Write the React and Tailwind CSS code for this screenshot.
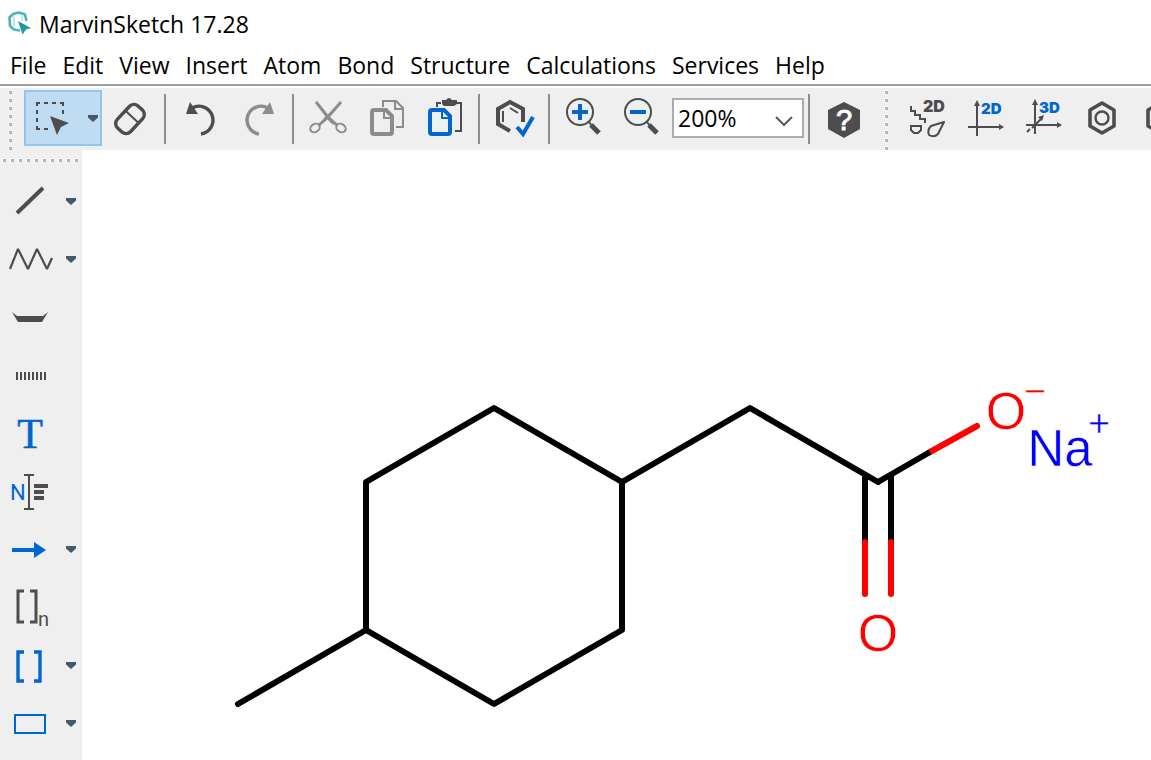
import React, { useState } from 'react'

const DARK = '#4d4d4d'
const GRAY = '#8c8c8c'
const BLUE = '#0066d0'

const menuItems = ['File', 'Edit', 'View', 'Insert', 'Atom', 'Bond', 'Structure', 'Calculations', 'Services', 'Help']

const Logo = () => (
    <svg width="24" height="26" viewBox="0 0 24 26" fill="none" aria-hidden="true">
        <path d="M5 3 L11 1.5 L17 3.5 L18.5 10 M5 3 L1.5 6.5 L2 15 L6 18.5 L12 19.5" stroke="#4db3b3" strokeWidth="2.6" strokeLinejoin="round" />
        <path d="M6 5 V15 M14 5 V10" stroke="#b5dfdf" strokeWidth="1.5" />
        <path d="M10 10 L23 17 L18 18.5 L14.5 23.5 Z" fill="#1f9a9a" />
    </svg>
)

const ToolIcon = ({ children, stroke = DARK, width = 2 }) => (
    <svg
        width="58"
        height="56"
        viewBox="0 0 58 56"
        fill="none"
        stroke={stroke}
        strokeWidth={width}
        className="block"
        aria-hidden="true"
    >
        {children}
    </svg>
)

const ToolButton = ({ label, children, disabled }) => (
    <button type="button" aria-label={label} disabled={disabled} className="h-14 w-[58px] shrink-0">
        {children}
    </button>
)

const DownArrow = () => (
    <svg width="10" height="8" viewBox="0 0 10 8" className="block" aria-hidden="true">
        <path d="M0 1 H10 V3.5 L5 8 L0 3.5 Z" fill="#46586a" />
    </svg>
)

const Separator = () => (
    <div className="flex w-3 shrink-0 pt-1 pl-1">
        <div className="h-[50px] w-[2px] bg-[#8c8c8c]" />
    </div>
)

const Dot = () => <span className="block size-1 shrink-0 border-t border-l border-white bg-[#b4b4b4]" />

const Grip = () => (
    <div className="flex w-6 shrink-0 flex-col gap-1 pl-2">
        {[...Array(8)].map((_, i) => <Dot key={i} />)}
    </div>
)

const TurnArrow = ({ color }) => (
    <>
        <path d="M20 18 A14 14 0 1 1 29 44" strokeWidth="3.4" />
        <path d="M14 24 L18 12 L26 24 Z" fill={color} stroke="none" />
    </>
)

const sheet = (
    <>
        <path d="M16 20 H28 L34 26 V42 Q34 44 32 44 H16 Q14 44 14 42 V22 Q14 20 16 20 Z" strokeWidth="4" />
        <path d="M26 20 V28 H34" strokeWidth="2" />
    </>
)

const hexRing = (
    <>
        <path d="M30 13 L42 20 V36 L30 43 L18 36 V20 Z" strokeWidth="3.6" strokeLinejoin="round" />
        <circle cx="30" cy="28" r="6.5" strokeWidth="2.4" />
    </>
)

const Toolbar = () => {
    const [zoom, setZoom] = useState('200%')

    return (
        <div className="flex h-[62px] overflow-hidden bg-[#efefef] pt-[2px]">
            <Grip />
            <div className="flex h-14 w-[78px] shrink-0 items-center border-2 border-[#8fc6f2] bg-[#c0dcf3]">
                <button type="button" aria-label="Rectangle selection" aria-pressed="true" className="w-[60px]">
                    <svg width="60" height="52" viewBox="0 0 60 52" fill="none" stroke={DARK} strokeWidth="2" className="block" aria-hidden="true">
                        <path d="M10 11 H38" strokeDasharray="4 4" />
                        <path d="M11 10 V38" strokeDasharray="4 4" />
                        <path d="M37 10 V23" strokeDasharray="4 4" />
                        <path d="M10 37 H24" strokeDasharray="4 4" />
                        <path d="M24 24 L43 31 L35 35 L31 43 Z" fill={DARK} stroke="none" />
                    </svg>
                </button>
                <button type="button" aria-label="Selection modes" className="flex w-[14px] justify-center">
                    <DownArrow />
                </button>
            </div>
            <ToolButton label="Erase">
                <ToolIcon width="3.4">
                    <g transform="rotate(-47 28 29)">
                        <rect x="13" y="20" width="30" height="18" rx="6" />
                        <path d="M31 20 V38" strokeWidth="2" />
                    </g>
                </ToolIcon>
            </ToolButton>
            <Separator />
            <ToolButton label="Undo">
                <ToolIcon><TurnArrow color={DARK} /></ToolIcon>
            </ToolButton>
            <ToolButton label="Redo" disabled>
                <ToolIcon stroke={GRAY}>
                    <g transform="matrix(-1 0 0 1 58 0)"><TurnArrow color={GRAY} /></g>
                </ToolIcon>
            </ToolButton>
            <Separator />
            <ToolButton label="Cut" disabled>
                <ToolIcon stroke={GRAY}>
                    <path d="M15 11 L31 30 L36 35 L32 34 L27 29 Z" fill={GRAY} stroke="none" />
                    <path d="M42 11 L25 31 L20 35 L24 28 Z" fill={GRAY} stroke="none" />
                    <path d="M16 12 L28 27 L37 35 M41 12 L28 27 L19 35" strokeWidth="3" />
                    <ellipse cx="15" cy="38" rx="5" ry="4" transform="rotate(-35 15 38)" />
                    <ellipse cx="41" cy="38" rx="5" ry="4" transform="rotate(35 41 38)" />
                </ToolIcon>
            </ToolButton>
            <ToolButton label="Copy" disabled>
                <ToolIcon stroke={GRAY}>
                    {sheet}
                    <path d="M25 17 V11 H38 L45 18 V37 H38 M37 11 V19 H45" />
                </ToolIcon>
            </ToolButton>
            <ToolButton label="Paste">
                <ToolIcon stroke={BLUE}>
                    {sheet}
                    <path d="M21 17 V13 H25 M40 13 H45 V41 H39" stroke={DARK} />
                    <path d="M26 10 H30 Q33 6 36 10 H41 V14 L38 16 H28 L26 14 Z" fill={DARK} stroke="none" />
                </ToolIcon>
            </ToolButton>
            <Separator />
            <ToolButton label="Check structure">
                <ToolIcon width="4">
                    <path d="M37 32 V19 L24 12 L12 19 V34 L24 41" />
                    <path d="M17 21 V32 M24 18 L32 23" strokeWidth="2" />
                    <path d="M31 37 L37 44 L47 27" stroke={BLUE} />
                </ToolIcon>
            </ToolButton>
            <Separator />
            <ToolButton label="Zoom in">
                <ToolIcon>
                    <circle cx="24" cy="22" r="13" />
                    <path d="M33 32 L36 36" />
                    <path d="M35 35 L43 43" strokeWidth="5" />
                    <path d="M16 22 H32 M24 14 V30" stroke={BLUE} strokeWidth="4" />
                </ToolIcon>
            </ToolButton>
            <ToolButton label="Zoom out">
                <ToolIcon>
                    <circle cx="24" cy="22" r="13" />
                    <path d="M33 32 L36 36" />
                    <path d="M35 35 L43 43" strokeWidth="5" />
                    <path d="M16 22 H32" stroke={BLUE} strokeWidth="4" />
                </ToolIcon>
            </ToolButton>
            <div className="relative mt-2 h-10 w-[132px] shrink-0">
                <select
                    aria-label="Zoom level"
                    value={zoom}
                    onChange={(e) => setZoom(e.target.value)}
                    className="h-full w-full appearance-none border-2 border-[#ababb3] bg-white pl-1 text-[23px] leading-6 text-black"
                >
                    <option>100%</option>
                    <option>200%</option>
                    <option>400%</option>
                </select>
                <svg width="18" height="12" viewBox="0 0 18 12" fill="none" className="pointer-events-none absolute top-[18px] right-[11px]" aria-hidden="true">
                    <path d="M1 1 L9 9 L17 1" stroke="#5a5a5a" strokeWidth="2" />
                </svg>
            </div>
            <Separator />
            <ToolButton label="Help">
                <ToolIcon>
                    <path d="M28 12 L44 20 V39 L28 48 L12 39 V20 Z" fill={DARK} stroke="none" />
                    <text x="28" y="40" textAnchor="middle" fontSize="29" fill="#fff" stroke="#fff" strokeWidth="1" className="font-['Liberation_Sans',sans-serif]">?</text>
                </ToolIcon>
            </ToolButton>
            <div className="-mr-[2px] flex pl-[2px]"><Grip /></div>
            <ToolButton label="Clean 2D">
                <ToolIcon>
                    <path d="M13 16 V21 H17 V25 H22 V29 H27 V33" />
                    <path d="M13 36 H23 V40 L20 43 H16 L13 40 Z" />
                    <path d="M46 32 L33 36 Q29 40 31 45 Q36 48 40 44 Z" strokeLinejoin="round" />
                    <text x="25" y="22" fontSize="16" fontWeight="900" fill={DARK} stroke="none" className="font-[Inter,sans-serif]">2D</text>
                </ToolIcon>
            </ToolButton>
            <ToolButton label="2D view">
                <ToolIcon>
                    <path d="M21 13 V46 M12 37 H45" />
                    <path d="M18 16 L21 10 L24 16 Z M43 34 L48 37 L43 40 Z" fill={DARK} stroke="none" />
                    <text x="25" y="24" fontSize="15" fontWeight="900" fill={BLUE} stroke="none" className="font-[Inter,sans-serif]">2D</text>
                </ToolIcon>
            </ToolButton>
            <ToolButton label="3D view">
                <ToolIcon>
                    <path d="M21 12 V44 M12 35 H45 M13 42 L16 39 M18 38 L28 28" />
                    <path d="M18 15 L21 9 L24 15 Z M43 32 L48 35 L43 38 Z M24 27 L30 25 L28 31 Z" fill={DARK} stroke="none" />
                    <text x="25" y="23" fontSize="15" fontWeight="900" fill={BLUE} stroke="none" className="font-[Inter,sans-serif]">3D</text>
                </ToolIcon>
            </ToolButton>
            <ToolButton label="Aromatize"><ToolIcon>{hexRing}</ToolIcon></ToolButton>
            <ToolButton label="Dearomatize"><ToolIcon>{hexRing}</ToolIcon></ToolButton>
        </div>
    )
}

const sideTools = [
    { label: 'Single bond', menu: true, icon: <path d="M17 41 L43 16" strokeWidth="4" /> },
    { label: 'Chain', menu: true, icon: <path d="M10 39 L18 19 L28 39 L37 19 L47 39 L52 28" strokeWidth="2.2" strokeLinejoin="bevel" /> },
    { label: 'Wedge', icon: <path d="M12 24 L18 34 H42 L48 24 L43 28 H17 Z" fill={DARK} stroke="none" /> },
    { label: 'Multiple bond', icon: <path d="M16 30 H46" strokeWidth="8" strokeDasharray="2 2" /> },
    {
        label: 'Text box',
        icon: <text x="30" y="44" textAnchor="middle" fontSize="42" fill={BLUE} stroke={BLUE} strokeWidth="0.5" className="font-['Liberation_Serif',serif]">T</text>,
    },
    {
        label: 'Name to structure',
        icon: (
            <>
                <text x="10" y="38" fontSize="22" fill={BLUE} stroke="none" className="font-[Roboto,sans-serif]">N</text>
                <path d="M29 13 V47 M24 13 H34 M24 47 H34" />
                <path d="M34 24 H48 M34 30 H44 M34 36 H44" strokeWidth="4" />
            </>
        ),
    },
    {
        label: 'Reaction arrow',
        menu: true,
        icon: (
            <>
                <path d="M12 30 H36" stroke={BLUE} strokeWidth="4" />
                <path d="M34 22 L46 30 L34 38 Z" fill={BLUE} stroke="none" />
            </>
        ),
    },
    {
        label: 'Repeating unit',
        icon: (
            <>
                <path d="M24 13 H18 V44 H24 M30 13 H36 V44 H30" strokeWidth="3" />
                <text x="38" y="48" fontSize="20" fill={DARK} stroke="none" className="font-[Roboto,sans-serif]">n</text>
            </>
        ),
    },
    { label: 'Brackets', menu: true, icon: <path d="M24 16 H18 V45 H24 M34 16 H40 V45 H34" stroke={BLUE} strokeWidth="3.4" /> },
    { label: 'Rectangle', menu: true, icon: <rect x="15" y="21" width="30" height="18" stroke={BLUE} /> },
]

const Sidebar = () => (
    <div className="w-[82px] shrink-0 bg-[#efefef]">
        <div className="flex h-[22px] gap-1 pt-2 pl-[2px]">
            {[...Array(10)].map((_, i) => <Dot key={i} />)}
        </div>
        {sideTools.map(({ label, menu, icon }) => (
            <div key={label} className="flex h-[58px]">
                <button type="button" aria-label={label} className="w-[60px]">
                    <svg width="60" height="58" viewBox="0 0 60 58" fill="none" stroke={DARK} strokeWidth="2" className="block" aria-hidden="true">
                        {icon}
                    </svg>
                </button>
                {menu && (
                    <button type="button" aria-label={`${label} options`} className="flex w-[22px] items-center justify-center">
                        <DownArrow />
                    </button>
                )}
            </div>
        ))}
    </div>
)

const Molecule = () => (
    <svg
        width="1069"
        height="610"
        viewBox="0 0 1069 610"
        fill="none"
        stroke="#000"
        strokeWidth="6"
        strokeLinejoin="round"
        strokeLinecap="round"
        className="block font-['Liberation_Sans',sans-serif]"
        role="img"
        aria-label="Sodium 2-(4-methylcyclohexyl)acetate"
    >
        {/* ring, methyl and side chain */}
        <path d="M284 332 L412 258 L540 332 V480 L412 554 L284 480 Z" />
        <path d="M156 554 L284 480 M540 332 L668 258 L796 332" />
        {/* C=O */}
        <path d="M783 326 V391 M809 326 V391" strokeLinecap="butt" />
        <path d="M783 392 V444 M809 392 V444" stroke="#f00" />
        <path d="M783 391 V400 M809 391 V400" stroke="#f00" strokeLinecap="butt" />
        {/* C-O */}
        <path d="M848 302 L895 276" stroke="#f00" />
        <path d="M796 332 L848 302" strokeLinecap="butt" />
        {/* the white outline keeps the atom labels light */}
        <g stroke="#fff" strokeWidth="0.5" fontSize="52" textAnchor="middle">
            <text x="796" y="501" fill="#f00">O</text>
            <text x="924" y="279" fill="#f00">O</text>
            <text x="978" y="316" fontSize="51" fill="#00f">Na</text>
            <text x="953" y="254" fontSize="38" fill="#f00">−</text>
            <text x="1017" y="286" fontSize="38" fill="#00f">+</text>
        </g>
    </svg>
)

const App = () => {
    return (
        <div className="flex min-h-screen flex-col bg-white font-['Open_Sans',sans-serif] text-black">
            <header className="flex h-12 items-center gap-[7px] pl-2">
                <Logo />
                <h1 className="text-[23px] leading-6">MarvinSketch 17.28</h1>
            </header>
            <nav className="flex h-9 gap-4 pt-[5px] pl-[10px]">
                {menuItems.map((item) => (
                    <button key={item} type="button" className="h-6 text-[23px] leading-6">{item}</button>
                ))}
            </nav>
            <div className="h-1 border-t-2 border-[#a0a0a0]" />
            <Toolbar />
            <div className="flex flex-1">
                <Sidebar />
                <main className="min-w-0 flex-1 overflow-hidden">
                    <Molecule />
                </main>
            </div>
        </div>
    )
}

export default App
